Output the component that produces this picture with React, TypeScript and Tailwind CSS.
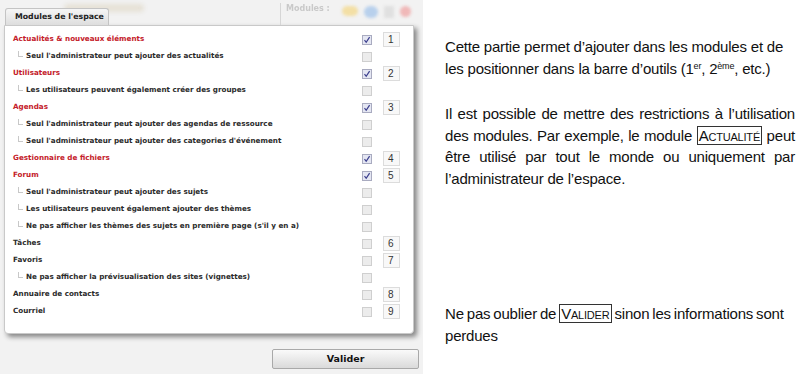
import React from "react";

type Row = {
  label: string;
  kind: "head" | "plain" | "sub";
  checked?: boolean;
  rank?: number;
};

const rows: Row[] = [
  { label: "Actualités & nouveaux éléments", kind: "head", checked: true, rank: 1 },
  { label: "Seul l'administrateur peut ajouter des actualités", kind: "sub" },
  { label: "Utilisateurs", kind: "head", checked: true, rank: 2 },
  { label: "Les utilisateurs peuvent également créer des groupes", kind: "sub" },
  { label: "Agendas", kind: "head", checked: true, rank: 3 },
  { label: "Seul l'administrateur peut ajouter des agendas de ressource", kind: "sub" },
  { label: "Seul l'administrateur peut ajouter des categories d'événement", kind: "sub" },
  { label: "Gestionnaire de fichiers", kind: "head", checked: true, rank: 4 },
  { label: "Forum", kind: "head", checked: true, rank: 5 },
  { label: "Seul l'administrateur peut ajouter des sujets", kind: "sub" },
  { label: "Les utilisateurs peuvent également ajouter des thèmes", kind: "sub" },
  { label: "Ne pas afficher les thèmes des sujets en première page (s'il y en a)", kind: "sub" },
  { label: "Tâches", kind: "plain", rank: 6 },
  { label: "Favoris", kind: "plain", rank: 7 },
  { label: "Ne pas afficher la prévisualisation des sites (vignettes)", kind: "sub" },
  { label: "Annuaire de contacts", kind: "plain", rank: 8 },
  { label: "Courriel", kind: "plain", rank: 9 },
];

function Check({ checked }: { checked?: boolean }) {
  return (
    <span
      className={`flex h-[10px] w-[10px] items-center justify-center border ${
        checked ? "border-[#a9abc0] bg-[#e4e6f2]" : "border-[#cfcfcf] bg-[#ececec]"
      }`}
    >
      {checked && (
        <svg width="8" height="8" viewBox="0 0 8 8">
          <path d="M1.5 4.2 L3.2 6.3 L6.6 1.2" fill="none" stroke="#3a3d8c" strokeWidth="1.2" />
        </svg>
      )}
    </span>
  );
}

function ModuleRow({ row }: { row: Row }) {
  return (
    <div className="flex h-[17px] items-center">
      <div className="flex flex-1 items-center">
        {row.kind === "sub" ? (
          <>
            <span className="ml-[13px] mr-[3px] mb-[5px] h-[6px] w-[5px] border-b border-l border-[#c8c8c8]" />
            <span className="text-[#2b2b2b]">{row.label}</span>
          </>
        ) : (
          <span className={`ml-[8px] ${row.kind === "head" ? "text-[#c4202a]" : "text-[#2b2b2b]"}`}>
            {row.label}
          </span>
        )}
      </div>
      <div className="w-[21px]">
        <Check checked={row.checked} />
      </div>
      <div className="mr-[13px] w-[17px]">
        {row.rank && (
          <span className="flex h-[15px] w-[17px] items-center border border-[#dcdcdc] bg-[#f8f8f8] pl-[4px] font-['Liberation_Sans',Arial,sans-serif] font-normal text-[10px] text-[#333]">
            {row.rank}
          </span>
        )}
      </div>
    </div>
  );
}

export default function App() {
  return (
    <div className="flex h-[374px] w-[800px] bg-white font-['Liberation_Sans',Arial,sans-serif]">
      <div className="flex w-[423px] flex-col bg-[#f2f2f2] pl-[4px] font-['DejaVu_Sans',Verdana,sans-serif]">
        <div className="relative h-[25px]">
          <div className="absolute left-[276px] top-[3px] h-[22px] w-px bg-[#d6d6d6]" />
          <span className="absolute left-[282px] top-[3px] text-[8px] font-bold text-[#c9c9c9] blur-[0.6px]">Modules :</span>
          <div className="absolute left-[338px] top-[6px] flex gap-[6px] blur-[1.5px]">
            <span className="h-[10px] w-[16px] rounded-full bg-[#f3dfa5]" />
            <span className="h-[12px] w-[14px] rounded-full bg-[#b8d0ec]" />
            <span className="h-[12px] w-[10px] bg-[#e0e0e0]" />
            <span className="h-[11px] w-[11px] rounded-full bg-[#f0b8b8]" />
          </div>
          <div className="absolute left-[60px] top-[4px] h-[8px] w-[80px] rounded bg-[#e6e1d6] blur-[2px]" />
          <div className="absolute left-[1px] top-[8px] flex h-[17px] w-[104px] items-center rounded-t-[3px] border border-b-0 border-[#c4c4c4] bg-gradient-to-b from-[#f6f6f6] to-[#dedede] pl-[9px] text-[7.8px] font-bold text-[#222]">
            Modules de l'espace
          </div>
        </div>
        <div className="w-[410px] rounded-b-[4px] border border-[#c9c9c9] bg-white pt-[5px] pb-[13px] text-[7.2px] font-bold shadow-[3px_3px_5px_rgba(0,0,0,0.45)]">
          {rows.map((r, i) => (
            <ModuleRow key={i} row={r} />
          ))}
        </div>
        <div className="mt-[15px] flex justify-end pr-[4px]">
          <button className="h-[20px] w-[147px] rounded-[2px] border border-[#a9a9a9] bg-gradient-to-b from-[#fafafa] to-[#dadada] text-[9.5px] font-bold text-[#111]">
            Valider
          </button>
        </div>
      </div>

      <div className="flex-1 pl-[22px] pr-[5px] pt-[36px] text-[15px] leading-[21.5px] tracking-[-0.2px] text-[#111]">
        <p>
          Cette partie permet d’ajouter dans les modules et de les positionner dans la barre d’outils (1
          <sup className="text-[9px] leading-none">er</sup>, 2<sup className="text-[9px] leading-none">ème</sup>, etc.)
        </p>
        <p className="mt-[24px] text-justify">
          Il est possible de mettre des restrictions à l’utilisation des modules. Par exemple, le module{" "}
          <span className="border border-[#333] px-[1px] leading-none [font-variant:small-caps]">Actualité</span> peut
          être utilisé par tout le monde ou uniquement par l’administrateur de l’espace.
        </p>
        <p className="mt-[114px] [word-spacing:-1px]">
          Ne pas oublier de{" "}
          <span className="border border-[#333] px-[1px] leading-none [font-variant:small-caps]">Valider</span> sinon
          les informations sont perdues
        </p>
      </div>
    </div>
  );
}
